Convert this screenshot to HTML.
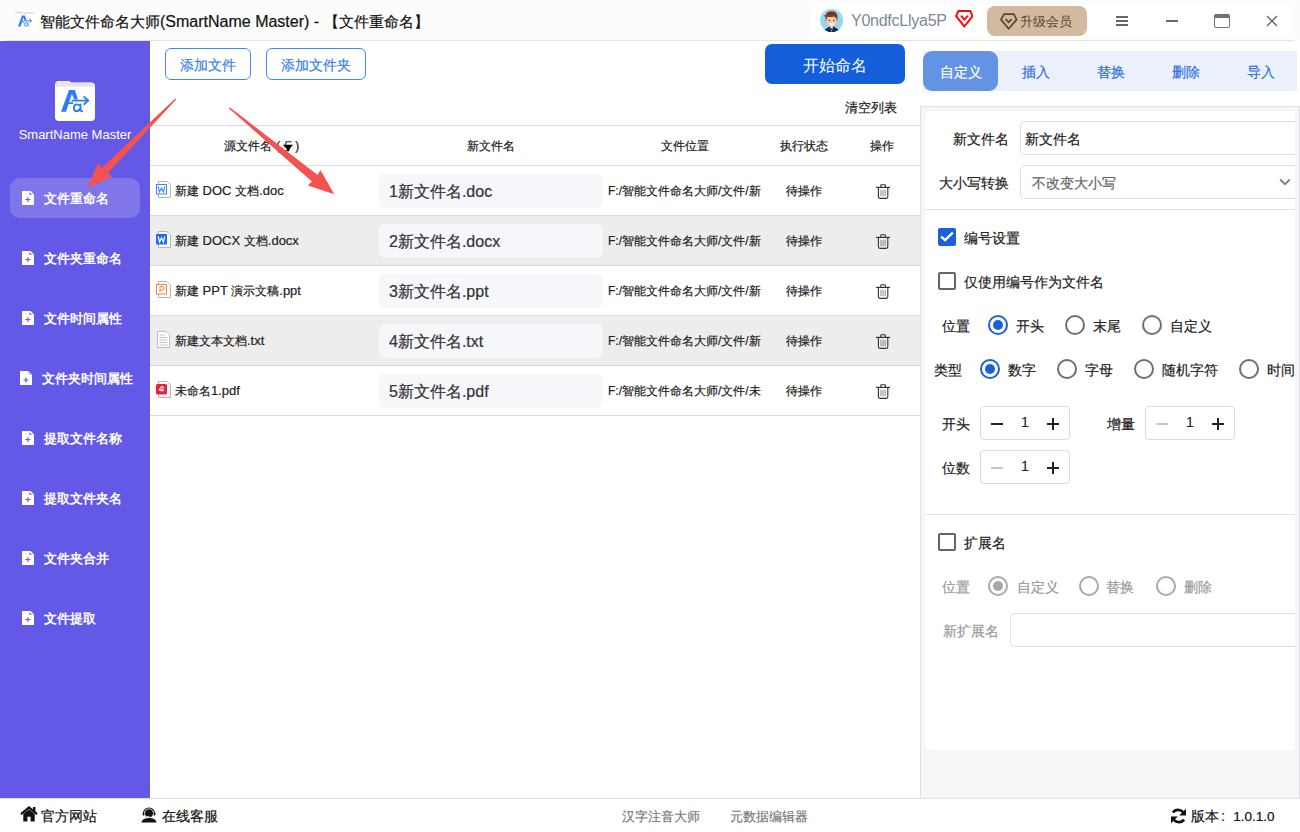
<!DOCTYPE html>
<html><head><meta charset="utf-8">
<style>
*{box-sizing:border-box;margin:0;padding:0}
html,body{width:1300px;height:832px;overflow:hidden;background:#fff;font-family:"Liberation Sans",sans-serif;color:#222}
.a{position:absolute;white-space:nowrap}
#title{left:0;top:0;width:1300px;height:40px;background:#fcfcfc}
#tline{left:6px;top:40px;width:1288px;height:1px;background:#e4e4e4}
#side{left:0;top:41px;width:150px;height:757px;background:#6459e7}
.nav{position:absolute;left:10px;width:130px;height:40px;border-radius:10px}
.nav.on{background:#7f76ea}
.nav svg{position:absolute;left:12px;top:13px}
.nav span{position:absolute;left:34px;top:12px;font-size:13px;font-weight:bold;color:#fff;line-height:18px}
#foot{left:0;top:798px;width:1300px;height:34px;border-top:1px solid #e2e2e2;background:#fff}
.btn-o{position:absolute;top:48px;height:32px;border:1px solid #3b8bf0;border-radius:6px;color:#3a7fe6;font-size:14px;line-height:32px;text-align:center}
.hline{position:absolute;left:150px;width:770px;height:1px;background:#dcdcdc}
.row{position:absolute;left:150px;width:770px;height:49px}
.row.g{background:#ededed}
.th{position:absolute;white-space:nowrap;top:138px;font-size:12px;line-height:16px;color:#222}
.fname .l{font-size:13px}
.fname{position:absolute;white-space:nowrap;left:175px;font-size:12px;color:#222;line-height:16px}
.nbox{position:absolute;white-space:nowrap;left:379px;width:224px;height:34px;border-radius:6px;background:#f6f7fb;font-size:16px;line-height:36px;padding-left:10px;color:#333}
.path{position:absolute;white-space:nowrap;left:608px;width:153px;overflow:hidden;font-size:12px;line-height:16px;color:#222}
.stat{position:absolute;white-space:nowrap;left:786px;font-size:12px;line-height:16px;color:#222}
#tabs{left:923px;top:51px;width:374px;height:40px;background:#ebf1fb}
.tab{position:absolute;top:0;width:75px;height:40px;text-align:center;line-height:43px;font-size:14px;color:#2f6fdc}
.tab.on{background:#6393e3;color:#fff;border-radius:9px}
#panel{left:920px;top:106px;width:380px;height:692px;background:#f5f6f8;border-left:1px solid #dde0e5;border-top:1px solid #dde0e5;border-right:1px solid #dde0e5}
#card{left:925px;top:111px;width:370px;height:639px;background:#fff;border-radius:6px 0 0 6px}
.lbl{position:absolute;white-space:nowrap;font-size:14px;line-height:18px;color:#222}
.dis{color:#9a9a9a}
.inp{position:absolute;border:1px solid #dcdfe6;border-right:none;border-radius:5px 0 0 5px;background:#fff}
.cb{position:absolute;width:18px;height:18px;border:2px solid #666;border-radius:2px}
.cb.on{background:#1a5fdb;border-color:#1a5fdb}
.rd{position:absolute;width:20px;height:20px;border:2px solid #6f6f6f;border-radius:50%}
.rd.on{border-color:#1a5fdb}
.rd.on::after{content:"";position:absolute;left:3px;top:3px;width:10px;height:10px;border-radius:50%;background:#1a5fdb}
.rd.dis{border-color:#a8a8a8}
.rd.dison::after{content:"";position:absolute;left:3px;top:3px;width:10px;height:10px;border-radius:50%;background:#a8a8a8}
.step{position:absolute;width:90px;height:34px;border:1px solid #dcdcdc;border-radius:4px}
.step .m{position:absolute;left:10px;top:16px;width:12px;height:2px;background:#222}
.step .m.d{background:#c8c8c8;height:1.5px}
.step .v{position:absolute;left:0;width:88px;top:5.5px;text-align:center;font-size:15px;line-height:18px;color:#222}
.step .p1{position:absolute;left:66px;top:16px;width:12px;height:2px;background:#222}
.step .p2{position:absolute;left:71px;top:11px;width:2px;height:12px;background:#222}
.th,.fname,.path,.stat,.lbl,.nbox,.tab,.btn-o{-webkit-text-stroke:0.2px currentColor}
</style></head><body>

<!-- title bar -->
<div id="title" class="a">
  <div class="a" style="left:811px;top:5px;width:483px;height:31px;background:#fff"></div>
  <svg class="a" style="left:15px;top:11px" width="20" height="20" viewBox="0 0 40 40">
    <path d="M0 4 Q0 0 4 0 L14 0 L16 1.5 L36 1.5 Q40 1.5 40 5.5 L40 36 Q40 40 36 40 L4 40 Q0 40 0 36 Z" fill="#fff"/>
    <path d="M0.3 5 Q0.3 0.3 4 0.3 L14 0.3 L16 1.8 L36 1.8 Q39.7 1.8 39.7 5.5 L39.7 5.8 L0.3 5.8 Z" fill="#e6e6e6"/>
    <path d="M6 30.8 L11 30.8 L13.6 23 L18.2 23 L18.2 21.2 L14.2 21.2 L16.7 13.5 L17.1 13.5 L19.2 18.6 L22.9 18.6 L19.9 9 L14 9 Z" fill="#2a7cf8"/>
    <path d="M16.5 19.6 L33 19.6 M28.6 15.4 L33.2 19.6 L28.6 23.8" stroke="#2a7cf8" stroke-width="1.9" fill="none"/>
    <path d="M24.8 24.8 Q23.8 23.4 21.6 23.4 Q19 23.4 19 26.9 Q19 30.2 21.6 30.2 Q23.8 30.2 24.8 27.6 M25.5 22.8 L25.5 29 Q25.5 30.2 26.8 30.2 L28 30.2" stroke="#2a7cf8" stroke-width="1.9" fill="none"/>
  </svg>
  <div class="a" style="left:40px;top:12px;font-size:15px;line-height:20px;color:#111;-webkit-text-stroke:0.2px #111">智能文件命名大师<span style="font-size:16px">(SmartName Master) - </span>【文件重命名】</div>
  <svg class="a" style="left:820px;top:9px" width="24" height="24" viewBox="0 0 24 24">
    <defs><clipPath id="avc"><circle cx="11.6" cy="11.5" r="11.5"/></clipPath></defs>
    <circle cx="11.6" cy="11.5" r="11.5" fill="#93d6f8"/>
    <g clip-path="url(#avc)">
    <path d="M4.5 24 L5 20.5 L9.5 17.5 L13.7 17.5 L18.2 20.5 L18.7 24 Z" fill="#0e2c4f"/>
    <path d="M10.3 17.5 L11.6 23.5 L12.9 17.5 Z" fill="#fff"/>
    <path d="M11.1 19 L11.6 23.5 L12.1 19 Z" fill="#0e2c4f"/>
    </g>
    <rect x="10.2" y="15.5" width="2.8" height="2.5" fill="#f2b591"/>
    <ellipse cx="5.9" cy="12.6" rx="1.2" ry="1.6" fill="#f2b08c"/>
    <ellipse cx="17.3" cy="12.6" rx="1.2" ry="1.6" fill="#f2b08c"/>
    <path d="M6.3 6.5 L6.3 10 Q6.3 17.8 11.6 17.8 Q16.9 17.8 16.9 10 L16.9 6.5 Z" fill="#f7c9a8"/>
    <path d="M5.8 12.5 L5.5 7 Q6 2.2 11.6 2.2 Q17.2 2.2 17.5 7.5 L17.2 12 L16.2 9.5 Q15.5 8.2 14 7.6 Q11 8.5 7.5 7.8 L6.8 9.5 Z" fill="#7a3a1c"/>
    <path d="M4.2 7 Q5 6.3 6 7" stroke="#7a3a1c" stroke-width="1" fill="none"/>
    <circle cx="9.3" cy="11.5" r="0.75" fill="#5a2f1a"/>
    <circle cx="13.9" cy="11.5" r="0.75" fill="#5a2f1a"/>
    <path d="M9.2 14.3 Q11.6 14 14 14.3 Q13.4 16.8 11.6 17 Q9.8 16.8 9.2 14.3 Z" fill="#fff"/>
  </svg>
  <div class="a" style="left:851px;top:11px;font-size:16px;line-height:20px;color:#7a8898;letter-spacing:-0.25px">Y0ndfcLlya5P</div>
  <svg class="a" style="left:955px;top:10px" width="18" height="18" viewBox="0 0 18 18">
    <path d="M3.4 1 L15.3 1 L17.6 6.2 L9.4 16.5 L1.1 6.2 Z" fill="none" stroke="#ff0a0a" stroke-width="2" stroke-linejoin="round"/>
    <path d="M6 5.7 L9.4 9.6 L12.9 5.7" fill="none" stroke="#ff0a0a" stroke-width="2"/>
  </svg>
  <div class="a" style="left:987px;top:6px;width:100px;height:30px;border-radius:8px;background:#d2baa0"></div>
  <svg class="a" style="left:1000px;top:13px" width="18" height="17" viewBox="0 0 18 17"><path d="M4 1.2 L13.8 1.2 L16.6 6.6 L8.7 15.8 L1 6.6 Z" fill="none" stroke="#5a4430" stroke-width="1.7" stroke-linejoin="round"/><path d="M5.6 6 L8.7 9.3 L11.8 6" fill="none" stroke="#5a4430" stroke-width="1.7"/></svg>
  <div class="a" style="left:1020px;top:13px;font-size:13px;line-height:18px;color:#5a4632">升级会员</div>
  <div class="a" style="left:1116px;top:16px;width:12px;height:2px;background:#666"></div>
  <div class="a" style="left:1116px;top:20px;width:12px;height:2px;background:#666"></div>
  <div class="a" style="left:1116px;top:24px;width:12px;height:2px;background:#666"></div>
  <div class="a" style="left:1166px;top:20px;width:12px;height:2px;background:#666"></div>
  <div class="a" style="left:1214px;top:14px;width:16px;height:14px;border:1.6px solid #727272;border-top:4.5px solid #727272;border-radius:2px"></div>
  <svg class="a" style="left:1266px;top:15px" width="12" height="12" viewBox="0 0 12 12"><path d="M1 1 L11 11 M11 1 L1 11" stroke="#6a6a6a" stroke-width="1.4"/></svg>
</div>
<div id="tline" class="a"></div>

<!-- sidebar -->
<div id="side" class="a">
  <svg class="a" style="left:55px;top:40px" width="40" height="40" viewBox="0 0 40 40">
    <path d="M0 4 Q0 0 4 0 L14 0 L16 1.5 L36 1.5 Q40 1.5 40 5.5 L40 36 Q40 40 36 40 L4 40 Q0 40 0 36 Z" fill="#fff"/>
    <path d="M0.3 5 Q0.3 0.3 4 0.3 L14 0.3 L16 1.8 L36 1.8 Q39.7 1.8 39.7 5.5 L39.7 5.8 L0.3 5.8 Z" fill="#e6e6e6"/>
    <path d="M6 30.8 L11 30.8 L13.6 23 L18.2 23 L18.2 21.2 L14.2 21.2 L16.7 13.5 L17.1 13.5 L19.2 18.6 L22.9 18.6 L19.9 9 L14 9 Z" fill="#2a7cf8"/>
    <path d="M16.5 19.6 L33 19.6 M28.6 15.4 L33.2 19.6 L28.6 23.8" stroke="#2a7cf8" stroke-width="1.9" fill="none"/>
    <path d="M24.8 24.8 Q23.8 23.4 21.6 23.4 Q19 23.4 19 26.9 Q19 30.2 21.6 30.2 Q23.8 30.2 24.8 27.6 M25.5 22.8 L25.5 29 Q25.5 30.2 26.8 30.2 L28 30.2" stroke="#2a7cf8" stroke-width="1.9" fill="none"/>
  </svg>
  <div class="a" style="left:0;top:85px;width:150px;text-align:center;font-size:13px;line-height:18px;color:#fff">SmartName Master</div>
  <div class="nav on" style="top:137px"><svg width="12" height="14" viewBox="0 0 12 14"><path d="M0 0 L8.6 0 L12 3.6 L12 14 L0 14 Z" fill="#fff"/><path d="M7.3 1.2 L7.3 3.8 L10.2 3.8 Z" fill="#6a5fe8"/><rect x="3.3" y="8" width="5.2" height="1.1" fill="#6a5fe8"/><rect x="5.35" y="5.9" width="1.1" height="5.2" fill="#6a5fe8"/></svg><span>文件重命名</span></div>
  <div class="nav" style="top:197px"><svg width="12" height="14" viewBox="0 0 12 14"><path d="M0 0 L8.6 0 L12 3.6 L12 14 L0 14 Z" fill="#fff"/><path d="M7.3 1.2 L7.3 3.8 L10.2 3.8 Z" fill="#6a5fe8"/><rect x="3.3" y="8" width="5.2" height="1.1" fill="#6a5fe8"/><rect x="5.35" y="5.9" width="1.1" height="5.2" fill="#6a5fe8"/></svg><span>文件夹重命名</span></div>
  <div class="nav" style="top:257px"><svg width="12" height="14" viewBox="0 0 12 14"><path d="M0 0 L8.6 0 L12 3.6 L12 14 L0 14 Z" fill="#fff"/><path d="M7.3 1.2 L7.3 3.8 L10.2 3.8 Z" fill="#6a5fe8"/><rect x="3.3" y="8" width="5.2" height="1.1" fill="#6a5fe8"/><rect x="5.35" y="5.9" width="1.1" height="5.2" fill="#6a5fe8"/></svg><span>文件时间属性</span></div>
  <div class="nav" style="top:317px"><svg style="left:10px" width="12" height="14" viewBox="0 0 12 14"><path d="M0 0 L8 0 L12 4 L12 14 L0 14 Z" fill="#fff"/><path d="M8 0 L8 4 L12 4" fill="#d8d4fa"/><path d="M3.5 9 L8.5 9 M6 6.5 L6 11.5" stroke="#6459e7" stroke-width="1.2"/></svg><span style="left:32px">文件夹时间属性</span></div>
  <div class="nav" style="top:377px"><svg width="12" height="14" viewBox="0 0 12 14"><path d="M0 0 L8.6 0 L12 3.6 L12 14 L0 14 Z" fill="#fff"/><path d="M7.3 1.2 L7.3 3.8 L10.2 3.8 Z" fill="#6a5fe8"/><rect x="3.3" y="8" width="5.2" height="1.1" fill="#6a5fe8"/><rect x="5.35" y="5.9" width="1.1" height="5.2" fill="#6a5fe8"/></svg><span>提取文件名称</span></div>
  <div class="nav" style="top:437px"><svg width="12" height="14" viewBox="0 0 12 14"><path d="M0 0 L8.6 0 L12 3.6 L12 14 L0 14 Z" fill="#fff"/><path d="M7.3 1.2 L7.3 3.8 L10.2 3.8 Z" fill="#6a5fe8"/><rect x="3.3" y="8" width="5.2" height="1.1" fill="#6a5fe8"/><rect x="5.35" y="5.9" width="1.1" height="5.2" fill="#6a5fe8"/></svg><span>提取文件夹名</span></div>
  <div class="nav" style="top:497px"><svg width="12" height="14" viewBox="0 0 12 14"><path d="M0 0 L8.6 0 L12 3.6 L12 14 L0 14 Z" fill="#fff"/><path d="M7.3 1.2 L7.3 3.8 L10.2 3.8 Z" fill="#6a5fe8"/><rect x="3.3" y="8" width="5.2" height="1.1" fill="#6a5fe8"/><rect x="5.35" y="5.9" width="1.1" height="5.2" fill="#6a5fe8"/></svg><span>文件夹合并</span></div>
  <div class="nav" style="top:557px"><svg width="12" height="14" viewBox="0 0 12 14"><path d="M0 0 L8.6 0 L12 3.6 L12 14 L0 14 Z" fill="#fff"/><path d="M7.3 1.2 L7.3 3.8 L10.2 3.8 Z" fill="#6a5fe8"/><rect x="3.3" y="8" width="5.2" height="1.1" fill="#6a5fe8"/><rect x="5.35" y="5.9" width="1.1" height="5.2" fill="#6a5fe8"/></svg><span>文件提取</span></div>
</div>

<!-- footer -->
<div id="foot" class="a">
  <svg class="a" style="left:20px;top:7px" width="18" height="16" viewBox="0 0 18 16"><path d="M1 8.2 L9 1.5 L17 8.2" stroke="#111" stroke-width="2.2" fill="none"/><rect x="13" y="1" width="2.4" height="4.5" fill="#111"/><path d="M3.3 8 L9 3.3 L14.7 8 L14.7 15.5 L10.6 15.5 L10.6 10.8 L7.4 10.8 L7.4 15.5 L3.3 15.5 Z" fill="#111"/></svg>
  <div class="a" style="left:41px;top:8px;font-size:14px;line-height:18px;color:#111;-webkit-text-stroke:0.2px #111">官方网站</div>
  <svg class="a" style="left:141px;top:7px" width="16" height="17" viewBox="0 0 16 17"><path d="M2.4 7.6 A5.6 5.6 0 0 1 13.6 7.6" stroke="#111" stroke-width="1.2" fill="none"/><circle cx="8" cy="7.3" r="4" fill="#111"/><rect x="1.7" y="6.8" width="1.6" height="2.6" rx="0.5" fill="#111"/><rect x="12.7" y="6.8" width="1.6" height="2.6" rx="0.5" fill="#111"/><path d="M0.4 16.6 Q1.2 12 8 12 Q14.8 12 15.6 16.6 Z" fill="#111"/><rect x="5.5" y="10.3" width="3" height="1" fill="#fff"/></svg>
  <div class="a" style="left:162px;top:8px;font-size:14px;line-height:18px;color:#111;-webkit-text-stroke:0.2px #111">在线客服</div>
  <div class="a" style="left:622px;top:9px;font-size:13px;line-height:18px;color:#777;-webkit-text-stroke:0.15px #777">汉字注音大师</div>
  <div class="a" style="left:730px;top:9px;font-size:13px;line-height:18px;color:#777;-webkit-text-stroke:0.15px #777">元数据编辑器</div>
  <svg class="a" style="left:1170px;top:9px" width="17" height="16" viewBox="0 0 17 16"><path d="M14 6.2 A6.2 6.2 0 0 0 3 4.6" stroke="#111" stroke-width="2.6" fill="none"/><path d="M16 0.8 L16 7.6 L9.2 7.6 Z" fill="#111"/><path d="M3 9.8 A6.2 6.2 0 0 0 14 11.4" stroke="#111" stroke-width="2.6" fill="none"/><path d="M1 15.2 L1 8.4 L7.8 8.4 Z" fill="#111"/></svg>
  <div class="a" style="left:1191px;top:8px;font-size:14px;line-height:18px;color:#111;-webkit-text-stroke:0.2px #111">版本<span style="margin-left:2px;font-size:15px">:</span><span style="font-size:13.5px;margin-left:8px">1.0.1.0</span></div>
</div>

<!-- main -->
<div class="btn-o" style="left:165px;width:86px">添加文件</div>
<div class="btn-o" style="left:266px;width:100px">添加文件夹</div>
<div class="a" style="left:765px;top:44px;width:140px;height:40px;border-radius:7px;background:#135edb;color:#fff;font-size:16px;line-height:43px;text-align:center">开始命名</div>
<div class="a" style="left:845px;top:99px;font-size:13px;line-height:18px;color:#222;-webkit-text-stroke:0.2px #222">清空列表</div>
<div class="row g" style="top:216px"></div>
<div class="row g" style="top:316px"></div>
<div class="hline" style="top:125px"></div>
<div class="hline" style="top:165px"></div>
<div class="hline" style="top:215px"></div>
<div class="hline" style="top:265px"></div>
<div class="hline" style="top:315px"></div>
<div class="hline" style="top:365px"></div>
<div class="hline" style="top:415px"></div>
<div class="th" style="left:224px">源文件名</div><div class="th" style="left:276px;font-size:13px">(</div><svg class="a" style="left:282px;top:141px" width="12" height="11" viewBox="0 0 12 11"><path d="M4 0.7 L9.5 0.7 M4.2 0.7 L3.3 4.5 M2.5 9.8 Q7 10 7.3 7" stroke="#222" stroke-width="1.1" fill="none"/><path d="M0.8 3.8 L11 3.8 L7.5 8 L7.2 10.2 L5 10.2 L4.8 8 Z" fill="#000"/></svg><div class="th" style="left:295px;font-size:13px">)</div>
<div class="th" style="left:467px">新文件名</div>
<div class="th" style="left:661px">文件位置</div>
<div class="th" style="left:780px">执行状态</div>
<div class="th" style="left:870px">操作</div>
<div class="a" style="left:156px;top:181px"><svg width="16" height="17" viewBox="0 0 16 17"><path d="M2.5 0.5 L11 0.5 L14.5 4 L14.5 16.5 L2.5 16.5 Z" fill="#fff" stroke="#b5b5b5" stroke-width="1"/><rect x="0.5" y="3.5" width="10" height="9.5" fill="#fff" stroke="#3d86f4" stroke-width="1"/><path d="M2.2 5.5 L3.6 11 L5.5 7 L7.4 11 L8.8 5.5" stroke="#3d86f4" stroke-width="1.1" fill="none"/></svg></div>
<div class="fname" style="top:183px">新建<span class="l"> DOC </span>文档<span class="l">.doc</span></div>
<div class="nbox" style="top:174px">1新文件名.doc</div>
<div class="path" style="top:183px">F:/智能文件命名大师/文件/新</div>
<div class="stat" style="top:183px">待操作</div>
<div class="a" style="left:876px;top:184px"><svg width="14" height="15" viewBox="0 0 14 15"><path d="M4.8 3 L4.8 1.6 Q4.8 0.8 5.6 0.8 L8.6 0.8 Q9.4 0.8 9.4 1.6 L9.4 3" stroke="#333" stroke-width="1.1" fill="none"/><path d="M0 3.4 L14 3.4" stroke="#333" stroke-width="1.2"/><path d="M2.4 3.6 L2.4 12.8 Q2.4 14.4 4 14.4 L10.2 14.4 Q11.8 14.4 11.8 12.8 L11.8 3.6" stroke="#333" stroke-width="1.1" fill="none"/><path d="M5 5.8 L5 12.2 M7.1 5.8 L7.1 12.2 M9.2 5.8 L9.2 12.2" stroke="#8a7a70" stroke-width="0.9"/></svg></div>
<div class="a" style="left:156px;top:231px"><svg width="16" height="17" viewBox="0 0 16 17"><path d="M2.5 0.5 L11 0.5 L14.5 4 L14.5 16.5 L2.5 16.5 Z" fill="#fff" stroke="#b5b5b5" stroke-width="1"/><rect x="0" y="3" width="11" height="10.5" rx="1" fill="#1c6ef2"/><path d="M2.2 5.5 L3.6 11 L5.5 7 L7.4 11 L8.8 5.5" stroke="#fff" stroke-width="1.2" fill="none"/></svg></div>
<div class="fname" style="top:233px">新建<span class="l"> DOCX </span>文档<span class="l">.docx</span></div>
<div class="nbox" style="top:224px">2新文件名.docx</div>
<div class="path" style="top:233px">F:/智能文件命名大师/文件/新</div>
<div class="stat" style="top:233px">待操作</div>
<div class="a" style="left:876px;top:234px"><svg width="14" height="15" viewBox="0 0 14 15"><path d="M4.8 3 L4.8 1.6 Q4.8 0.8 5.6 0.8 L8.6 0.8 Q9.4 0.8 9.4 1.6 L9.4 3" stroke="#333" stroke-width="1.1" fill="none"/><path d="M0 3.4 L14 3.4" stroke="#333" stroke-width="1.2"/><path d="M2.4 3.6 L2.4 12.8 Q2.4 14.4 4 14.4 L10.2 14.4 Q11.8 14.4 11.8 12.8 L11.8 3.6" stroke="#333" stroke-width="1.1" fill="none"/><path d="M5 5.8 L5 12.2 M7.1 5.8 L7.1 12.2 M9.2 5.8 L9.2 12.2" stroke="#8a7a70" stroke-width="0.9"/></svg></div>
<div class="a" style="left:156px;top:281px"><svg width="16" height="17" viewBox="0 0 16 17"><path d="M2.5 0.5 L11 0.5 L14.5 4 L14.5 16.5 L2.5 16.5 Z" fill="#fff" stroke="#b5b5b5" stroke-width="1"/><rect x="0.5" y="3.5" width="10" height="9.5" fill="#fff" stroke="#f08a3c" stroke-width="1"/><path d="M4 11 L4 5.5 L6.3 5.5 Q8 5.5 8 7.3 Q8 9 6.3 9 L4 9" stroke="#f08a3c" stroke-width="1.1" fill="none"/></svg></div>
<div class="fname" style="top:283px">新建<span class="l"> PPT </span>演示文稿<span class="l">.ppt</span></div>
<div class="nbox" style="top:274px">3新文件名.ppt</div>
<div class="path" style="top:283px">F:/智能文件命名大师/文件/新</div>
<div class="stat" style="top:283px">待操作</div>
<div class="a" style="left:876px;top:284px"><svg width="14" height="15" viewBox="0 0 14 15"><path d="M4.8 3 L4.8 1.6 Q4.8 0.8 5.6 0.8 L8.6 0.8 Q9.4 0.8 9.4 1.6 L9.4 3" stroke="#333" stroke-width="1.1" fill="none"/><path d="M0 3.4 L14 3.4" stroke="#333" stroke-width="1.2"/><path d="M2.4 3.6 L2.4 12.8 Q2.4 14.4 4 14.4 L10.2 14.4 Q11.8 14.4 11.8 12.8 L11.8 3.6" stroke="#333" stroke-width="1.1" fill="none"/><path d="M5 5.8 L5 12.2 M7.1 5.8 L7.1 12.2 M9.2 5.8 L9.2 12.2" stroke="#8a7a70" stroke-width="0.9"/></svg></div>
<div class="a" style="left:156px;top:331px"><svg width="16" height="17" viewBox="0 0 16 17"><path d="M1.5 0.5 L10 0.5 L13.5 4 L13.5 16.5 L1.5 16.5 Z" fill="#fff" stroke="#bdbdbd" stroke-width="1"/><path d="M3.5 4 L9 4 M3.5 6.5 L11.5 6.5 M3.5 9 L11.5 9 M3.5 11.5 L11.5 11.5 M3.5 14 L11.5 14" stroke="#c4c4c4" stroke-width="1"/></svg></div>
<div class="fname" style="top:333px">新建文本文档<span class="l">.txt</span></div>
<div class="nbox" style="top:324px">4新文件名.txt</div>
<div class="path" style="top:333px">F:/智能文件命名大师/文件/新</div>
<div class="stat" style="top:333px">待操作</div>
<div class="a" style="left:876px;top:334px"><svg width="14" height="15" viewBox="0 0 14 15"><path d="M4.8 3 L4.8 1.6 Q4.8 0.8 5.6 0.8 L8.6 0.8 Q9.4 0.8 9.4 1.6 L9.4 3" stroke="#333" stroke-width="1.1" fill="none"/><path d="M0 3.4 L14 3.4" stroke="#333" stroke-width="1.2"/><path d="M2.4 3.6 L2.4 12.8 Q2.4 14.4 4 14.4 L10.2 14.4 Q11.8 14.4 11.8 12.8 L11.8 3.6" stroke="#333" stroke-width="1.1" fill="none"/><path d="M5 5.8 L5 12.2 M7.1 5.8 L7.1 12.2 M9.2 5.8 L9.2 12.2" stroke="#8a7a70" stroke-width="0.9"/></svg></div>
<div class="a" style="left:156px;top:381px"><svg width="16" height="17" viewBox="0 0 16 17"><path d="M2.5 0.5 L11 0.5 L14.5 4 L14.5 16.5 L2.5 16.5 Z" fill="#fff" stroke="#b5b5b5" stroke-width="1"/><rect x="0" y="3" width="11" height="10.5" rx="1.5" fill="#e0243a"/><path d="M3 9.5 Q5.5 4 7 6 Q8 8 4.5 9 Q6 10.5 8 9" stroke="#fff" stroke-width="1.1" fill="none"/></svg></div>
<div class="fname" style="top:383px">未命名<span class="l">1.pdf</span></div>
<div class="nbox" style="top:374px">5新文件名.pdf</div>
<div class="path" style="top:383px">F:/智能文件命名大师/文件/未</div>
<div class="stat" style="top:383px">待操作</div>
<div class="a" style="left:876px;top:384px"><svg width="14" height="15" viewBox="0 0 14 15"><path d="M4.8 3 L4.8 1.6 Q4.8 0.8 5.6 0.8 L8.6 0.8 Q9.4 0.8 9.4 1.6 L9.4 3" stroke="#333" stroke-width="1.1" fill="none"/><path d="M0 3.4 L14 3.4" stroke="#333" stroke-width="1.2"/><path d="M2.4 3.6 L2.4 12.8 Q2.4 14.4 4 14.4 L10.2 14.4 Q11.8 14.4 11.8 12.8 L11.8 3.6" stroke="#333" stroke-width="1.1" fill="none"/><path d="M5 5.8 L5 12.2 M7.1 5.8 L7.1 12.2 M9.2 5.8 L9.2 12.2" stroke="#8a7a70" stroke-width="0.9"/></svg></div>
<svg class="a" style="left:0;top:0" width="1300" height="832" viewBox="0 0 1300 832">
  <path d="M175.3 98.5 L176.2 99.4 L108.1 172.7 L112.1 176.7 L86.9 187.8 L98.2 163.1 L101.8 167.8 Z" fill="#f45151"/>
  <path d="M229.6 107.2 L317.6 175 L320.4 170.1 L334.3 194.3 L307.8 185.5 L311.9 181.6 L228.8 108.2 Z" fill="#f45151"/>
</svg>
<!-- right panel -->
<div id="panel" class="a"></div>
<div id="card" class="a"></div>

<div id="tabs" class="a">
  <div class="tab on" style="left:0">自定义</div>
  <div class="tab" style="left:75px">插入</div>
  <div class="tab" style="left:150px">替换</div>
  <div class="tab" style="left:225px">删除</div>
  <div class="tab" style="left:300px">导入</div>
</div>
<div class="lbl a" style="left:953px;top:130px">新文件名</div>
<div class="inp" style="left:1020px;top:121px;width:275px;height:34px"></div>
<div class="lbl a" style="left:1025px;top:130px">新文件名</div>
<div class="lbl a" style="left:939px;top:174px">大小写转换</div>
<div class="inp" style="left:1020px;top:165px;width:275px;height:34px"></div>
<div class="lbl a" style="left:1032px;top:174px;color:#666">不改变大小写</div>
<svg class="a" style="left:1279px;top:178px" width="12" height="8" viewBox="0 0 12 8"><path d="M1.2 1.5 L6 6.2 L10.8 1.5" stroke="#808080" stroke-width="1.8" fill="none"/></svg>
<div class="a" style="left:925px;top:209px;width:370px;height:1px;background:#e0e2e6"></div>
<div class="cb on" style="left:938px;top:228px"></div>
<svg class="a" style="left:938px;top:228px" width="18" height="18" viewBox="0 0 18 18"><path d="M3.2 8.6 L7.1 12.2 L14.8 4.6" stroke="#fff" stroke-width="2.4" fill="none"/></svg>
<div class="lbl a" style="left:964px;top:229px">编号设置</div>
<div class="cb" style="left:938px;top:272px"></div>
<div class="lbl a" style="left:964px;top:273px">仅使用编号作为文件名</div>
<div class="lbl a" style="left:942px;top:317px">位置</div>
<div class="rd on" style="left:988px;top:315px"></div>
<div class="lbl a" style="left:1016px;top:317px">开头</div>
<div class="rd" style="left:1065px;top:315px"></div>
<div class="lbl a" style="left:1093px;top:317px">末尾</div>
<div class="rd" style="left:1142px;top:315px"></div>
<div class="lbl a" style="left:1170px;top:317px">自定义</div>
<div class="lbl a" style="left:934px;top:361px">类型</div>
<div class="rd on" style="left:980px;top:359px"></div>
<div class="lbl a" style="left:1008px;top:361px">数字</div>
<div class="rd" style="left:1057px;top:359px"></div>
<div class="lbl a" style="left:1085px;top:361px">字母</div>
<div class="rd" style="left:1134px;top:359px"></div>
<div class="lbl a" style="left:1162px;top:361px">随机字符</div>
<div class="rd" style="left:1239px;top:359px"></div>
<div class="a" style="left:1267px;top:361px;width:28px;overflow:hidden"><div class="lbl" style="position:static">时间</div></div>
<div class="lbl a" style="left:942px;top:415px">开头</div>
<div class="step" style="left:980px;top:406px"><div class="m"></div><div class="v">1</div><div class="p1"></div><div class="p2"></div></div>
<div class="lbl a" style="left:1107px;top:415px">增量</div>
<div class="step" style="left:1145px;top:406px"><div class="m d"></div><div class="v">1</div><div class="p1"></div><div class="p2"></div></div>
<div class="lbl a" style="left:942px;top:459px">位数</div>
<div class="step" style="left:980px;top:450px"><div class="m d"></div><div class="v">1</div><div class="p1"></div><div class="p2"></div></div>
<div class="a" style="left:925px;top:514px;width:370px;height:1px;background:#e0e2e6"></div>
<div class="cb" style="left:938px;top:533px"></div>
<div class="lbl a" style="left:964px;top:534px">扩展名</div>
<div class="lbl a dis" style="left:942px;top:578px">位置</div>
<div class="rd dis dison" style="left:988px;top:576px"></div>
<div class="lbl a dis" style="left:1017px;top:578px">自定义</div>
<div class="rd dis" style="left:1079px;top:576px"></div>
<div class="lbl a dis" style="left:1106px;top:578px">替换</div>
<div class="rd dis" style="left:1156px;top:576px"></div>
<div class="lbl a dis" style="left:1184px;top:578px">删除</div>
<div class="lbl a dis" style="left:943px;top:622px">新扩展名</div>
<div class="inp" style="left:1010px;top:613px;width:285px;height:34px"></div>
</body></html>
